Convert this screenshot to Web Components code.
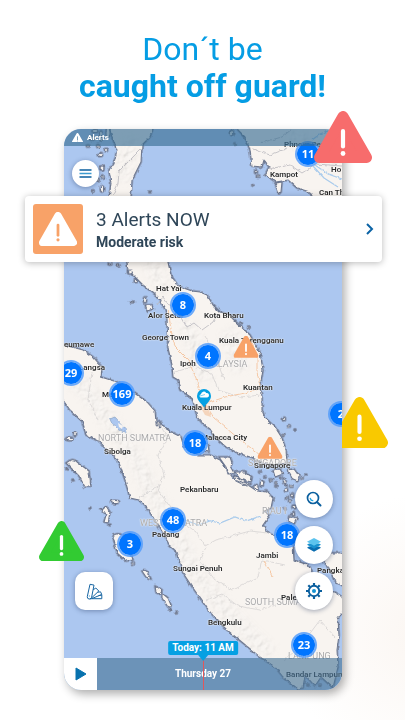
<!DOCTYPE html>
<html lang="en">
<head>
<meta charset="utf-8">
<meta name="viewport" content="width=device-width, initial-scale=1">
<title>Weather alerts</title>
<style>
  html { font-family: Roboto, "Liberation Sans", sans-serif; }
  body { margin: 0; min-height: 100vh; background: radial-gradient(circle at 105% 88%, #fbf6f2 0, #ffffff 140px); }
</style>
</head>
<body>
<promo-page></promo-page>

<script>
class BaseElement extends HTMLElement {
  constructor() {
    super();
    this.attachShadow({ mode: 'open' });
  }
  connectedCallback() {
    this.shadowRoot.innerHTML = this.render();
  }
}

/* Warning triangle: --tone fills the shape, --mark the exclamation mark. */
customElements.define('alert-triangle', class extends BaseElement {
  render() {
    return `<style>
      :host { display: block; }
      svg { display: block; width: 100%; }
    </style>
    <svg viewBox="0 0 58 52" aria-hidden="true">
      <path d="M29 5.5L52.5 46.5H5.5Z" fill="var(--tone)" stroke="var(--tone)" stroke-width="11" stroke-linejoin="round"/>
      <path d="M29 20V35.5" stroke="var(--mark, #fff)" stroke-width="4.2" stroke-linecap="round"/>
      <circle cx="29" cy="42.5" r="2.4" fill="var(--mark, #fff)"/>
    </svg>`;
  }
});

/* Anything pinned to a map coordinate. */
class MapItem extends BaseElement {
  connectedCallback() {
    this.style.left = (this.getAttribute('x') - 64) / 278 * 100 + '%';
    this.style.top = (this.getAttribute('y') - 129) / 561 * 100 + '%';
    super.connectedCallback();
  }
}

customElements.define('map-label', class extends MapItem {
  render() {
    return `<style>
      :host { position: absolute; transform: translateY(-50%); white-space: nowrap; font-size: 8px; line-height: 10px; font-weight: 600; color: #2b2b2b;
        text-shadow: 0 0 1px #fff, 0 0 2px #fff; }
      :host([region]) { font-size: 9px; font-weight: 400; color: #aaa9aa; }
    </style><slot></slot>`;
  }
});

customElements.define('map-cluster', class extends MapItem {
  render() {
    return `<style>
      :host { position: absolute; transform: translate(-50%, -50%); }
      button { display: grid; place-items: center; width: 26px; height: 26px; padding: 0; border: 2px solid rgba(84,156,250,.85); border-radius: 50%;
        background: #0075ff; background-clip: padding-box; color: #fff; font: 700 11px/14px "Noto Sans", "Open Sans", sans-serif; }
    </style><button type="button"><slot></slot></button>`;
  }
});

customElements.define('map-warning', class extends MapItem {
  render() {
    return `<style>
      :host { position: absolute; width: 25px; transform: translate(-50%, -50%); --tone: #f8a268; }
    </style><alert-triangle></alert-triangle>`;
  }
});

customElements.define('location-pin', class extends MapItem {
  render() {
    return `<style>
      :host { position: absolute; width: 16px; transform: translate(-50%, -100%); }
      svg { display: block; width: 100%; }
    </style>
    <svg viewBox="0 0 16 20" aria-hidden="true">
      <path d="M8 19.500C6 16 1 12.500 1 8A7 7 0 0 1 15 8C15 12.500 10 16 8 19.500Z" fill="#05a0e3"/>
      <path d="M4.500 9.500A1.700 1.700 0 0 1 5 6.300A2.800 2.800 0 0 1 10.200 5A2.300 2.300 0 0 1 11.300 9.500Z" fill="#fff"/>
      <path d="M4 8L9 6.500" stroke="#4abbe9" stroke-width=".7"/>
    </svg>`;
  }
});

customElements.define('map-canvas', class extends BaseElement {
  render() {
    const land = `
      M108 120L111 134L115 145L117 150L114 163L109 170L111 183L109 199L112 225L121 248L127 262L128 270L137 279L143 285L158 297L165 309L167 318L168 348L172 365L173 377L178 380L180 390L192 398L195 408L197 417L203 424L210 429L216 438L226 447L238 453L253 458L262 463L272 465L287 463L286 450L282 438L275 427L265 418L262 410L262 398L260 388L263 370L260 353L250 335L237 323L228 314L220 312L213 305L207 295L200 292L192 291L178 286L171 275L167 258L150 244L136 220L131 196L132 180L141 162L142 145L150 137L156 120Z
      M60 344L72 347L83 350L93 357L102 367L101 377L117 382L130 390L147 402L155 411L156 422L161 422L165 428L173 433L181 437L184 447L197 455L210 455L220 460L227 470L233 478L248 485L257 491L267 492L273 498L271 508L263 512L270 515L263 525L268 533L280 537L293 544L294 560L308 565L315 577L322 587L332 591L346 599V607L338 618L339 635L337 650L338 667L333 688L321 677L315 686L305 675L303 688L298 689L283 677L275 667L260 657L243 643L227 630L215 618L207 608L193 588L183 573L176 551L170 546L160 528L147 508L139 500L130 498L125 480L118 460L110 453L100 442L86 435L82 421L70 410L60 396Z
      M236 120L238 130L245 137L250 150L252 166L262 167L264 160L269 167L265 175L276 182L288 180L297 188L310 192L314 200L328 215L346 210V120Z
      M346 553H326L323 562L330 570L334 580L346 588Z
      M66 463Q73 457 77 462L89 471L91 487L85 487L79 476Z
      M113 537Q114 532 123 535L130 550L133 560L126 561L117 553Z
      M142 571Q145 567 149 575L151 579L146 577Z
      M155 586L162 591L160 594L156 592Z M162 593L168 598L171 605L168 607L162 598Z
      M106 506L110 512L108 523L104 522L106 515L102 510Z
      M219 457H230L232 463L230 466L234 473L228 474L226 467Z
      M235 472L245 472L252 477L251 482L240 479Z M234 475L242 480L250 484L246 486L236 481Z
      M254 485L258 486L258 490L254 489Z
      M288 470L294 469L299 476L298 481L293 479Z M273 470L280 469L283 474L275 477Z
      M289 517L297 518L294 524L288 521Z M204 442L208 444L209 452L204 451Z
      M275 183L282 182L281 192L279 194Z M145 305L152 305L153 309L147 311Z
      M261 480L264 482L263 486L260 485Z M283 477L286 481L287 487L284 483Z`;
    const dots = [[70,439,4,1.8],[75,434,1.500,1.500],[67,469,1,.8],[73,480,1,.8],[115,502,4.500,1.600],[90,508,.8,.8],[101,509,1,.8],[110,525,.8,.8],[133,563,1.200,1.200],[170,609,.8,.8],[176,613,1.200,.8],[132,302,2,.8],[145,300,1.500,3],[241,323,1.200,.8],[249,327,1.200,1],[256,172,1.400,1.600],[258,176,1.500,1],[253,186,1,1],[284,419,1.400,1.800],[289,426,1.200,1.200],[295,430,.9,.9],[283,435,.9,1.400],[150,192,1,.8],[93,191,1,1],[102,189,1.600,3],[102,202,1,4],[98,146,1.200,1.400],[100,155,2.500,1.500],[92,138,3,2],[101,136,1.500,5],[108,133,2,4],[95,131,3,1.500],[88,146,1.500,1],[106,150,1.500,1.500],[102,168,2,2],[98,180,1,1.500],[103,177,1,2],[110,264,1.800,1],[118,265,2,1],[130,272,2.500,2],[136,281,1.800,1.500],[232,133,1.500,2.500],[235,144,1,1],[260,472,1.200,1],[265,477,1,1],[271,480,1.500,1],[276,483,1,1.200],[280,478,1,1],[266,491,1,1],[276,486,1,1],[286,490,1.500,2],[291,486,1.200,1.200],[287,498,1.500,1],[292,495,1.500,2],[290,501,1.400,1.200],[294,507,2,1.800],[298,503,1,1],[302,478,1,1.200],[306,475,.8,.8],[285,509,1,1],[293,514,1.500,1.500],[157,424,1,2],[160,425,.8,3],[308,685,1,1],[320,685,1,1]]
      .map(([x, y, a, b]) => `<ellipse cx="${x}" cy="${y}" rx="${a}" ry="${b}"/>`).join('');
    return `<style>
      :host { display: block; position: relative; overflow: hidden; border-radius: inherit; background: #acc7f0; }
      svg { display: block; width: 100%; }
    </style>
    <svg viewBox="64 129 278 561" role="img" aria-label="Map of Malaysia and Sumatra">
      <defs>
        <clipPath id="land"><path d="${land}"/></clipPath>
        <filter id="coast" x="-5%" y="-5%" width="110%" height="110%">
          <feTurbulence type="fractalNoise" baseFrequency=".22" numOctaves="2" seed="4"/>
          <feDisplacementMap in="SourceGraphic" scale="3.500" xChannelSelector="R" yChannelSelector="G"/>
        </filter>
        <filter id="relief" x="0" y="0" width="100%" height="100%">
          <feTurbulence type="fractalNoise" baseFrequency=".16" numOctaves="3" seed="8" result="n"/>
          <feDiffuseLighting in="n" surfaceScale="2.500" lighting-color="#fff" result="l"><feDistantLight azimuth="225" elevation="55"/></feDiffuseLighting>
          <feComposite in="l" in2="SourceGraphic" operator="in"/>
        </filter>
        <filter id="soft"><feGaussianBlur stdDeviation="4"/></filter>
        <mask id="hills"><g fill="none" stroke="#fff" stroke-width="15" filter="url(#soft)">
          <path d="M64 368L90 395L112 425L135 455L150 490L172 525L193 570L225 610L270 655"/>
          <path d="M185 320L195 345L205 380M228 330L240 370M132 140L122 180M290 135L340 165M150 262L165 290"/>
        </g></mask>
      </defs>
      <g filter="url(#coast)">
        <g fill="#f8f4f0" stroke="#94a4c2" stroke-width="2.800" stroke-linejoin="round"><path d="${land}"/>${dots}</g>
        <g fill="#f8f4f0" stroke="#6c778f" stroke-width="1.100" stroke-linejoin="round"><path d="${land}"/>${dots}</g>
      </g>
      <g clip-path="url(#land)"><g mask="url(#hills)" style="mix-blend-mode:multiply" opacity=".22">
        <rect x="64" y="129" width="278" height="561" filter="url(#relief)"/></g></g>
      <g fill="none" filter="url(#coast)" stroke-width=".8">
        <path stroke="#b9b8be" d="M141 149L130 160L119 171L118 184L113 195M157 305L163 297L168 304L178 310L187 327L194 323L202 330L213 322L217 314M260 143L282 137L292 129M268 169L290 165L302 173L316 164L342 166M250 148L270 155L288 148"/>
        <path stroke="#d6d3d3" d="M158 422L168 438L158 455L164 475L158 490L168 504L180 520M139 498L152 490L160 485M180 520L196 532L205 546L216 540L232 536L250 531L268 533M206 547L200 560L215 580L232 590L258 577L262 560L285 565M206 600L222 594L238 606L260 610L275 605M335 637L320 620L308 636L294 652L284 660M92 372L88 400L98 420M175 372L195 366L212 374L218 390L240 397L262 395M205 336L214 352L224 380"/>
        <path stroke="#f5c8a5" stroke-width="1" d="M168 310L172 335L175 347L188 360L196 378L203 400L214 418L238 438L260 455L268 461M205 404L225 397L245 393L260 388M250 337L257 355L257 372L261 390M264 560L268 568L273 577M200 409L210 406"/>
        <path stroke="#a9cbec" stroke-width="1.200" d="M313 166L324 178L338 187M315 165L328 174L342 179M312 140L320 134L328 131M207 520L220 523L235 517L246 521L261 516M185 520L198 525L210 521"/>
        <path fill="#acc7f0" stroke="#92aaca" d="M110 419L115 417L125 428L126 433L118 429L112 424Z"/>
      </g>
      <path d="M118 423L123 426L122 429L119 427Z" fill="#f8f4f0"/>
      <path d="M202 401L206 402L209 410L211 417L205 415L201 408Z" fill="#f4c7a5" opacity=".7"/>
    </svg>
    <slot></slot>`;
  }
});

customElements.define('map-button', class extends BaseElement {
  render() {
    return `<style>
      :host { display: block; --size: 38px; --radius: 50%; }
      :host([square]) { --radius: 10px; }
      :host([small]) { --size: 27px; }
      button { display: grid; place-items: center; width: var(--size); height: var(--size); padding: 0; border: 0; border-radius: var(--radius);
        background: #fff; box-shadow: 0 1px 5px rgba(20,40,80,.4); }
    </style><button type="button" aria-label="${this.getAttribute('label')}"><slot></slot></button>`;
  }
});

customElements.define('time-bar', class extends BaseElement {
  render() {
    return `<style>
      :host { display: grid; grid-template-columns: 33px 1fr 33px; height: 32px; position: relative; background: rgba(69,115,150,.62); color: #fff; }
      button { display: grid; place-items: center; padding: 0; border: 0; background: #fff; }
      .day { place-self: center; font-size: 10px; line-height: 12px; font-weight: 700; }
      .line { position: absolute; left: 50%; top: 0; bottom: 0; width: 1px; background: #e0575c; }
      .now { position: absolute; left: 50%; bottom: 35px; transform: translateX(-50%); padding: 1px 4px; border-radius: 2px; background: #05a0e3;
        font-size: 10px; line-height: 12px; font-weight: 700; white-space: nowrap; }
      .now::after { content: ""; position: absolute; left: 50%; top: 100%; margin-left: -5px; border: 5px solid transparent; border-top: 6px solid #05a0e3; border-bottom: 0; }
    </style>
    <button type="button" aria-label="Play"><svg width="12" height="14" viewBox="0 0 12 14" aria-hidden="true"><path d="M1 1L11 7L1 13Z" fill="#0872ae" stroke="#0872ae" stroke-linejoin="round"/></svg></button>
    <span class="line"></span>
    <span class="day">Thursday 27</span>
    <span class="now">Today: 11 AM</span>`;
  }
});

customElements.define('map-screen', class extends BaseElement {
  render() {
    return `<style>
      :host { display: block; position: relative; border-radius: 17px; box-shadow: 3px 4px 10px rgba(0,0,0,.32); }
      .chrome { position: absolute; inset: 0; display: flex; flex-direction: column; border-radius: inherit; overflow: hidden; }
      header { display: flex; align-items: center; gap: 4px; height: 17px; padding-left: 8px; background: rgba(54,108,146,.64); color: #fff; font-size: 8px; line-height: 10px; font-weight: 700; }
      header alert-triangle { width: 11px; --tone: #fff; --mark: #5c88a9; }
      .menu { padding: 14px 8px; }
      .tools { display: flex; align-items: flex-end; justify-content: space-between; margin-top: auto; padding: 0 9px 48px 11px; }
      .stack { display: grid; gap: 8px; }
      svg { display: block; }
    </style>
    <map-canvas>
      <map-label region x="98" y="438">NORTH SUMATRA</map-label>
      <map-label region x="204" y="364">MALAYSIA</map-label>
      <map-label region x="248" y="463">SINGAPORE</map-label>
      <map-label region x="262" y="511">RIAU I</map-label>
      <map-label region x="140" y="523">WEST SUMATRA</map-label>
      <map-label region x="245" y="602">SOUTH SUMATRA</map-label>
      <map-label region x="288" y="656">LAMPUNG</map-label>
      <map-label x="284" y="145">Phnom Penh</map-label>
      <map-label x="270" y="175">Kampot</map-label>
      <map-label x="331" y="170">Ho</map-label>
      <map-label x="319" y="193">Can Th</map-label>
      <map-label x="156" y="289">Hat Yai</map-label>
      <map-label x="148" y="316">Alor Setar</map-label>
      <map-label x="204" y="316">Kota Bharu</map-label>
      <map-label x="142" y="338">George Town</map-label>
      <map-label x="219" y="341">Kuala Terengganu</map-label>
      <map-label x="180" y="364">Ipoh</map-label>
      <map-label x="243" y="388">Kuantan</map-label>
      <map-label x="64" y="345">eumawe</map-label>
      <map-label x="79" y="368">Langsa</map-label>
      <map-label x="102" y="395">Me</map-label>
      <map-label x="182" y="408">Kuala Lumpur</map-label>
      <map-label x="201" y="438">Malacca City</map-label>
      <map-label x="104" y="452">Sibolga</map-label>
      <map-label x="254" y="466">Singapore</map-label>
      <map-label x="180" y="490">Pekanbaru</map-label>
      <map-label x="152" y="535">Padang</map-label>
      <map-label x="256" y="556">Jambi</map-label>
      <map-label x="173" y="569">Sungai Penuh</map-label>
      <map-label x="317" y="571">Pangka</map-label>
      <map-label x="281" y="598">Palem</map-label>
      <map-label x="208" y="623">Bengkulu</map-label>
      <map-label x="286" y="675">Bandar Lampun</map-label>
      <map-cluster x="308" y="154">11</map-cluster>
      <map-cluster x="183" y="305">8</map-cluster>
      <map-cluster x="208" y="356">4</map-cluster>
      <map-cluster x="71" y="373">29</map-cluster>
      <map-cluster x="122" y="394">169</map-cluster>
      <map-cluster x="341" y="414">2</map-cluster>
      <map-cluster x="195" y="443">18</map-cluster>
      <map-cluster x="173" y="520">48</map-cluster>
      <map-cluster x="130" y="544">3</map-cluster>
      <map-cluster x="287" y="535">18</map-cluster>
      <map-cluster x="304" y="645">23</map-cluster>
      <map-warning x="246" y="347"></map-warning>
      <map-warning x="270" y="448"></map-warning>
      <location-pin x="204" y="408"></location-pin>
    </map-canvas>
    <div class="chrome">
      <header><alert-triangle></alert-triangle>Alerts</header>
      <div class="menu"><map-button small label="Menu">
        <svg width="13" height="9" viewBox="0 0 13 9" fill="none" stroke-width="1.300" aria-hidden="true"><path d="M.5 1H12.500M.5 8H12.500" stroke="#0b5f9e"/><path d="M.5 4.500H12.500" stroke="#3d9bd0"/></svg>
      </map-button></div>
      <div class="tools">
        <map-button square label="Map styles">
          <svg width="17" height="17" viewBox="0 0 17 17" fill="none" stroke="#1765a2" stroke-width="1" stroke-linejoin="round" aria-hidden="true">
            <path d="M4 1.300L8 2.100L5.600 14.300A2.100 2.100 0 0 1 1.300 13.500Z"/>
            <path d="M7.200 6.800L9.800 5L12.800 8L5.500 15M11.500 9.300L14.500 8.800L15.800 11.500L6 15.500M12.500 12.600L15.800 12V15.700H4"/>
            <path d="M2.800 13H4" stroke="#3d9bd0"/>
          </svg>
        </map-button>
        <div class="stack">
          <map-button label="Search">
            <svg width="16" height="16" viewBox="0 0 16 16" fill="none" stroke-linecap="round" aria-hidden="true"><circle cx="7" cy="7" r="5.500" stroke="#0b5f9e" stroke-width="1.700"/><path d="M11.200 11.200L14.500 14.500" stroke="#0b5f9e" stroke-width="2"/><path d="M4.300 7.500Q4.800 9.500 6.800 9.600" stroke="#20a3df" stroke-width="1.300"/></svg>
          </map-button>
          <map-button label="Layers">
            <svg width="16" height="16" viewBox="0 0 16 16" aria-hidden="true"><path d="M1 10.800L3 9.500H13L15 10.800L8 14.800Z" fill="#0a6caf"/><path d="M1 7.800L3 6.500H13L15 7.800L8 11.800Z" fill="#1991cf"/><path d="M8 1L15 4.800L8 8.700L1 4.800Z" fill="#5cc3ee"/></svg>
          </map-button>
          <map-button label="Settings">
            <svg width="18" height="18" viewBox="0 0 18 18" fill="none" aria-hidden="true"><circle cx="9" cy="9" r="5.200" stroke="#0b5f9e" stroke-width="1.900"/><path d="M9 1V3.500M9 14.500V17M1 9H3.500M14.500 9H17M3.300 3.300L5 5M13 13L14.700 14.700M3.300 14.700L5 13M13 5L14.700 3.300" stroke="#0b5f9e" stroke-width="2.200"/><circle cx="9" cy="9" r="2" fill="#1593d2"/></svg>
          </map-button>
        </div>
      </div>
      <time-bar></time-bar>
    </div>`;
  }
});

customElements.define('alert-card', class extends BaseElement {
  render() {
    return `<style>
      :host { display: block; }
      a { display: grid; grid-template-columns: 50px 1fr auto; align-items: center; column-gap: 13px; padding: 8px; border-radius: 4px; background: #fff;
        box-shadow: 0 1px 7px rgba(0,0,0,.28); color: #2f4658; text-decoration: none; }
      .icon { display: grid; place-items: center; height: 50px; border-radius: 3px; background: #f8a268; }
      alert-triangle { width: 38px; --tone: #fff; --mark: #f8a268; }
      .text { padding-top: 2px; }
      .title { display: block; font-size: 19px; line-height: 24px; font-weight: 400; }
      .risk { display: block; font-size: 14px; line-height: 20px; font-weight: 700; }
    </style>
    <a href="#alerts">
      <span class="icon"><alert-triangle></alert-triangle></span>
      <span class="text"><slot name="title" class="title"></slot><slot name="risk" class="risk"></slot></span>
      <svg width="8" height="14" viewBox="0 0 8 14" fill="none" aria-hidden="true"><path d="M1 2L6 7L1 12" stroke="#0b63a5" stroke-width="2"/></svg>
    </a>`;
  }
});

customElements.define('promo-page', class extends BaseElement {
  render() {
    return `<style>
      :host { display: flow-root; overflow: hidden; padding: 31px 0 30px; }
      h1 { margin: 0 0 24px; text-align: center; color: #059de4; font-size: 32px; line-height: 37px; font-weight: 400; }
      h1 strong { display: block; font-weight: 700; }
      .scene { position: relative; }
      map-screen { margin: 0 63px 0 64px; }
      .card { position: absolute; left: 25px; right: 23px; top: 67px; }
      .float { position: absolute; }
      .red { width: 58px; right: 33px; top: -18px; --tone: #f76c6c; }
      .green { width: 45px; left: 39px; top: 392px; --tone: #32cb32; }
      .amber { width: 46px; right: 17px; top: 268px; overflow: hidden; display: flex; justify-content: flex-end; --tone: #f9c900; }
      .amber alert-triangle { flex: 0 0 57px; }
    </style>
    <main>
      <h1>Don´t be <strong>caught off guard!</strong></h1>
      <div class="scene">
        <map-screen></map-screen>
        <alert-card class="card"><span slot="title">3 Alerts NOW</span><span slot="risk">Moderate risk</span></alert-card>
        <alert-triangle class="float red"></alert-triangle>
        <div class="float amber"><alert-triangle></alert-triangle></div>
        <alert-triangle class="float green"></alert-triangle>
      </div>
    </main>`;
  }
});
</script>
</body>
</html>
